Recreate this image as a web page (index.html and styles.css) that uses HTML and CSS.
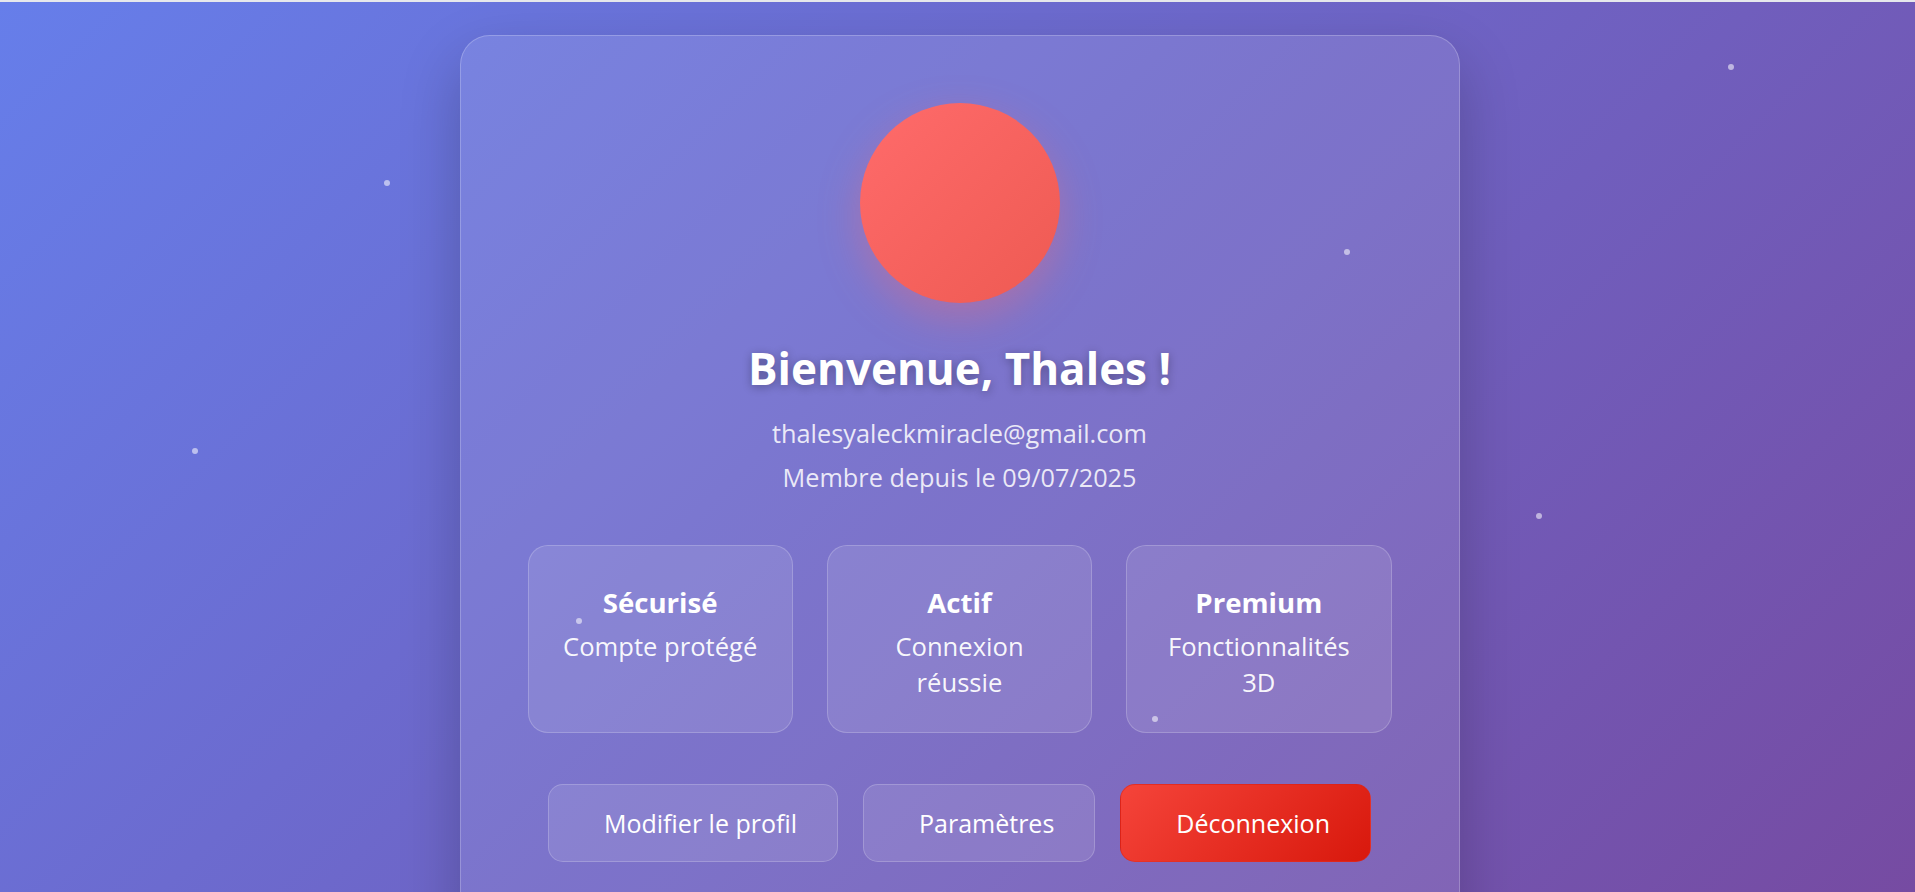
FILE: index.html
```html
<!DOCTYPE html>
<html lang="fr">
<head>
<meta charset="utf-8">
<title>Profil</title>
<link rel="stylesheet" href="styles.css">
</head>
<body>
<div class="topline"></div>
<main class="page">
  <section class="profile-card">
    <div class="avatar"></div>
    <h1 class="welcome">Bienvenue, Thales !</h1>
    <p class="meta">thalesyaleckmiracle@gmail.com</p>
    <p class="meta">Membre depuis le 09/07/2025</p>

    <div class="features">
      <div class="feature">
        <h3 class="feature-title">Sécurisé</h3>
        <p class="feature-desc">Compte protégé</p>
      </div>
      <div class="feature">
        <h3 class="feature-title">Actif</h3>
        <p class="feature-desc">Connexion réussie</p>
      </div>
      <div class="feature">
        <h3 class="feature-title">Premium</h3>
        <p class="feature-desc">Fonctionnalités 3D</p>
      </div>
    </div>

    <div class="actions">
      <button class="btn"><span class="btn-icon"></span>Modifier le profil</button>
      <button class="btn"><span class="btn-icon"></span>Paramètres</button>
      <button class="btn btn-danger"><span class="btn-icon"></span>Déconnexion</button>
    </div>
  </section>
</main>

<span class="particle" style="left:384px;top:180px"></span>
<span class="particle" style="left:192px;top:448px"></span>
<span class="particle" style="left:576px;top:618px"></span>
<span class="particle" style="left:1152px;top:716px"></span>
<span class="particle" style="left:1344px;top:249px"></span>
<span class="particle" style="left:1728px;top:64px"></span>
<span class="particle" style="left:1536px;top:513px"></span>
</body>
</html>
```

FILE: styles.css
```css
* {
  box-sizing: border-box;
}

html, body {
  margin: 0;
  padding: 0;
  height: 100%;
  overflow: hidden;
}

body {
  font-family: "Open Sans", "Noto Sans", sans-serif;
  background: linear-gradient(135deg, #667eea 0%, #764ba2 100%);
  color: #fff;
  position: relative;
}

.topline {
  height: 2px;
  background: #e6e8ec;
}

.page {
  display: flex;
  justify-content: center;
  padding: 33px 0 0 4px;
}

.profile-card {
  width: 1000px;
  min-height: 1000px;
  background: rgba(255, 255, 255, 0.1);
  border: 1px solid rgba(255, 255, 255, 0.22);
  border-radius: 30px;
  box-shadow: 0 25px 60px rgba(0, 0, 0, 0.22);
  padding: 67px 67px 40px;
  display: flex;
  flex-direction: column;
  align-items: center;
  text-align: center;
}

.avatar {
  width: 200px;
  height: 200px;
  border-radius: 50%;
  background: linear-gradient(135deg, #ff6b6b 0%, #ee5a52 100%);
  box-shadow: 0 15px 40px rgba(255, 107, 107, 0.35);
  flex-shrink: 0;
}

.welcome {
  margin: 39px 0 0;
  font-size: 44px;
  line-height: 52px;
  font-weight: 700;
  text-shadow: 0 2px 10px rgba(0, 0, 0, 0.3);
}

.meta {
  margin: 0;
  font-size: 25.3px;
  line-height: 40px;
  color: rgba(255, 255, 255, 0.85);
}

.welcome + .meta {
  margin-top: 19px;
}

.meta + .meta {
  margin-top: 4px;
}

.features {
  width: 100%;
  margin-top: 48px;
  display: grid;
  grid-template-columns: repeat(3, 1fr);
  gap: 34px;
}

.feature {
  background: rgba(255, 255, 255, 0.1);
  border: 1px solid rgba(255, 255, 255, 0.2);
  border-radius: 20px;
  padding: 40px 30px 31px;
}

.feature-title {
  margin: 0 0 11px;
  font-size: 27.6px;
  line-height: 32px;
  font-weight: 700;
}

.feature-desc {
  margin: 0;
  font-size: 25.6px;
  line-height: 36px;
  color: rgba(255, 255, 255, 0.95);
}

.actions {
  margin-top: 51px;
  display: flex;
  justify-content: center;
  gap: 25px;
}

.btn {
  font-family: inherit;
  font-size: 25px;
  line-height: 34px;
  color: #fff;
  background: rgba(255, 255, 255, 0.1);
  border: 1px solid rgba(255, 255, 255, 0.2);
  border-radius: 15px;
  padding: 21px 40px 21px 41px;
  display: flex;
  align-items: center;
  cursor: pointer;
}

.btn-icon {
  display: inline-block;
  width: 0;
  margin-right: 14px;
}

.btn-danger {
  background: linear-gradient(135deg, #f5443a 0%, #d8180c 100%);
  border-color: rgba(220, 40, 30, 0.6);
}

.particle {
  position: absolute;
  width: 6px;
  height: 6px;
  border-radius: 50%;
  background: rgba(255, 255, 255, 0.55);
}
```
